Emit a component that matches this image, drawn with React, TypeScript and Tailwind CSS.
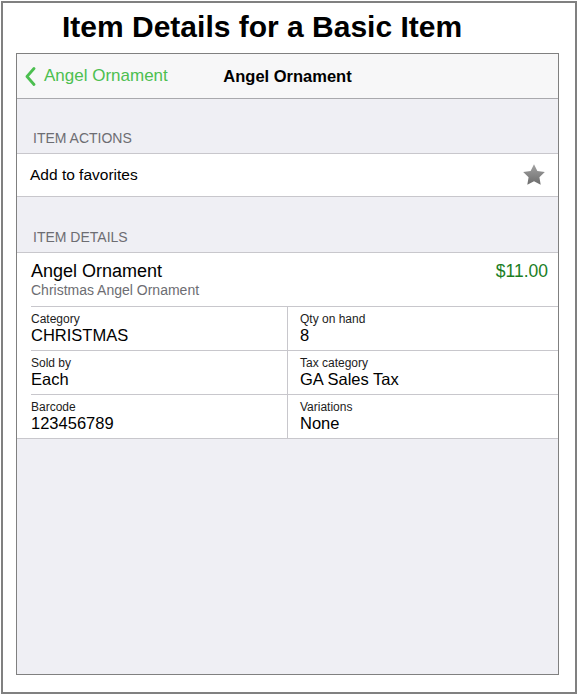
const details = [
  [
    { label: "Category", value: "CHRISTMAS" },
    { label: "Qty on hand", value: "8" },
  ],
  [
    { label: "Sold by", value: "Each" },
    { label: "Tax category", value: "GA Sales Tax" },
  ],
  [
    { label: "Barcode", value: "123456789" },
    { label: "Variations", value: "None" },
  ],
];

const StarIcon = () => (
  <svg width="26" height="26" viewBox="0 0 24 24">
    <defs>
      <linearGradient id="starFill" x1="0" y1="0" x2="0" y2="1">
        <stop offset="0" stopColor="#a3a3a3" />
        <stop offset="1" stopColor="#6c6c6c" />
      </linearGradient>
    </defs>
    <polygon
      points="12,2 15.09,8.26 22,9.27 17,14.14 18.18,21.02 12,17.77 5.82,21.02 7,14.14 2,9.27 8.91,8.26"
      fill="url(#starFill)"
    />
  </svg>
);

const SectionHeader = ({ title, height }: { title: string; height: string }) => (
  <div className={`flex items-end pl-[16px] pb-[6px] ${height}`}>
    <span className="text-[14px] leading-[18px] text-[#6d6d72]">{title}</span>
  </div>
);

export default function App() {
  return (
    <div
      className="w-[578px] h-[696px] bg-white p-[1px]"
      style={{ fontFamily: '"Liberation Sans", Arial, sans-serif' }}
    >
      <div className="w-[576px] h-[693px] border-2 border-[#808080] flex flex-col">
        <div className="h-[50px] pl-[59px] pt-[9px]">
          <h1 className="text-[30px] leading-[30px] font-bold text-black">
            Item Details for a Basic Item
          </h1>
        </div>

        <div className="ml-[13px] w-[543px] h-[622px] border border-[#808080] bg-[#efeff4] flex flex-col">
          {/* nav bar */}
          <div className="relative h-[45px] bg-[#f7f7f8] border-b border-[#a9a9ad] flex items-center">
            <div className="flex items-center pl-[8px] gap-[8px] text-[17px] text-[#4cbf50]">
              <svg width="11" height="19" viewBox="0 0 11 19" fill="none">
                <path
                  d="M9 1.5 L2 9.5 L9 17.5"
                  stroke="#4cbf50"
                  strokeWidth="2.8"
                  strokeLinecap="round"
                  strokeLinejoin="round"
                />
              </svg>
              <span className="leading-[20px]">Angel Ornament</span>
            </div>
            <div className="absolute inset-0 flex items-center justify-center pointer-events-none">
              <span className="text-[16.5px] font-bold text-black">Angel Ornament</span>
            </div>
          </div>

          <SectionHeader title="ITEM ACTIONS" height="h-[54px]" />
          <div className="h-[44px] bg-white border-y border-[#c8c7cc] flex items-center justify-between pl-[13px] pr-[11px]">
            <span className="text-[15.5px] text-black">Add to favorites</span>
            <StarIcon />
          </div>

          <SectionHeader title="ITEM DETAILS" height="h-[55px]" />
          <div className="bg-white border-y border-[#c8c7cc]">
            <div className="h-[53px] flex justify-between pl-[14px] pr-[10px] pt-[8px]">
              <div className="flex flex-col">
                <span className="text-[18px] leading-[21px] text-black">Angel Ornament</span>
                <span className="text-[14px] leading-[16px] text-[#6d6d72]">
                  Christmas Angel Ornament
                </span>
              </div>
              <span className="text-[17.5px] leading-[21px] text-[#1b7e1f]">$11.00</span>
            </div>
            {details.map((row, i) => (
              <div key={i} className="ml-[14px] h-[44px] border-t border-[#c8c7cc] flex">
                {row.map((cell, j) => (
                  <div
                    key={cell.label}
                    className={
                      j === 0
                        ? "w-[257px] border-r border-[#c8c7cc] pt-[5px]"
                        : "flex-1 pl-[12px] pt-[5px]"
                    }
                  >
                    <div className="text-[12px] leading-[14px] text-[#1c1c1c]">{cell.label}</div>
                    <div className="text-[16.5px] leading-[19px] text-black">{cell.value}</div>
                  </div>
                ))}
              </div>
            ))}
          </div>
        </div>
      </div>
    </div>
  );
}
